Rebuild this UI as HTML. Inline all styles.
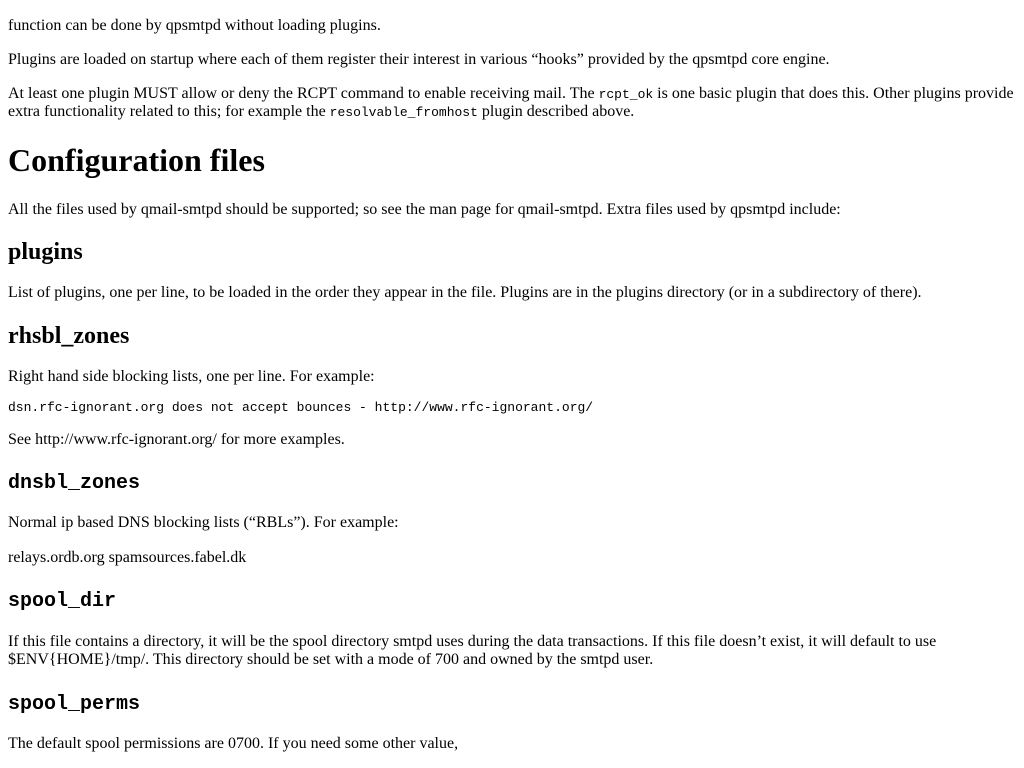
<!DOCTYPE html>
<html><head><meta charset="utf-8"><style>
body{margin:0;background:#fff;color:#000;font-family:"Liberation Serif",serif;font-size:16px;}
.l{position:absolute;left:8px;white-space:nowrap;line-height:18px;}
code,.m{font-family:"Liberation Mono",monospace;font-size:13px;}
h1{position:absolute;left:8px;margin:0;font-size:32px;line-height:36px;white-space:nowrap;}
h2{position:absolute;left:8px;margin:0;font-size:24px;line-height:28px;white-space:nowrap;}
h3{position:absolute;left:8px;margin:0;font-family:"Liberation Mono",monospace;font-size:20px;line-height:22px;white-space:nowrap;}
</style></head><body>
<div class="l" style="top:17px">function can be done by qpsmtpd without loading plugins.</div>
<div class="l" style="top:51px">Plugins are loaded on startup where each of them register their interest in various “hooks” provided by the qpsmtpd core engine.</div>
<div class="l" style="top:85px">At least one plugin MUST allow or deny the RCPT command to enable receiving mail. The <code>rcpt_ok</code> is one basic plugin that does this. Other plugins provide</div>
<div class="l" style="top:103px">extra functionality related to this; for example the <code>resolvable_fromhost</code> plugin described above.</div>
<h1 style="top:142px">Configuration files</h1>
<div class="l" style="top:201px">All the files used by qmail-smtpd should be supported; so see the man page for qmail-smtpd. Extra files used by qpsmtpd include:</div>
<h2 style="top:238px">plugins</h2>
<div class="l" style="top:284px">List of plugins, one per line, to be loaded in the order they appear in the file. Plugins are in the plugins directory (or in a subdirectory of there).</div>
<h2 style="top:322px">rhsbl_zones</h2>
<div class="l" style="top:368px">Right hand side blocking lists, one per line. For example:</div>
<div class="l m" style="top:399px">dsn.rfc-ignorant.org does not accept bounces - http://www.rfc-ignorant.org/</div>
<div class="l" style="top:431px">See http://www.rfc-ignorant.org/ for more examples.</div>
<h3 style="top:473px">dnsbl_zones</h3>
<div class="l" style="top:514px">Normal ip based DNS blocking lists (“RBLs”). For example:</div>
<div class="l" style="top:549px">relays.ordb.org spamsources.fabel.dk</div>
<h3 style="top:591px">spool_dir</h3>
<div class="l" style="top:633px">If this file contains a directory, it will be the spool directory smtpd uses during the data transactions. If this file doesn’t exist, it will default to use</div>
<div class="l" style="top:651px">$ENV{HOME}/tmp/. This directory should be set with a mode of 700 and owned by the smtpd user.</div>
<h3 style="top:694px">spool_perms</h3>
<div class="l" style="top:735px">The default spool permissions are 0700. If you need some other value,</div>
</body></html>
